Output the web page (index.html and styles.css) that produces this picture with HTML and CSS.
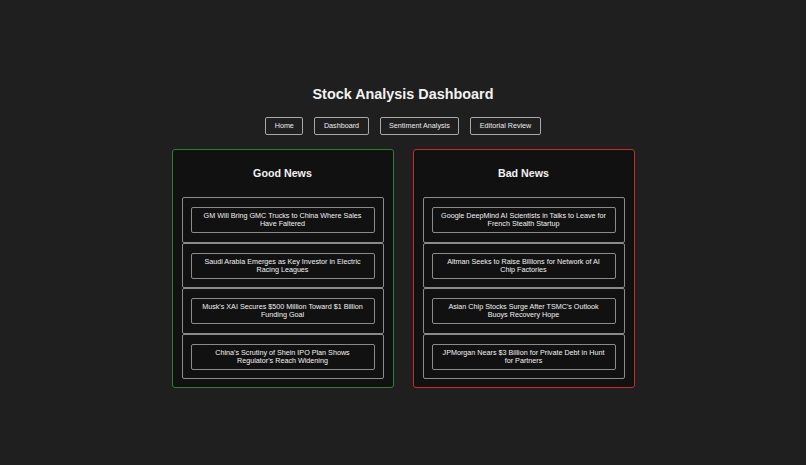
FILE: index.html
```html
<!DOCTYPE html>
<html lang="en">
<head>
<meta charset="utf-8">
<title>Stock Analysis Dashboard</title>
<link rel="stylesheet" href="styles.css">
</head>
<body>
<div class="page">
  <h1 class="title">Stock Analysis Dashboard</h1>
  <nav class="nav">
    <a class="nav-btn">Home</a>
    <a class="nav-btn">Dashboard</a>
    <a class="nav-btn">Sentiment Analysis</a>
    <a class="nav-btn">Editorial Review</a>
  </nav>
  <div class="columns">
    <section class="panel panel-good">
      <h2 class="panel-title">Good News</h2>
      <ul class="news-list">
        <li class="news-item"><div class="news-card">GM Will Bring GMC Trucks to China Where Sales Have Faltered</div></li>
        <li class="news-item"><div class="news-card">Saudi Arabia Emerges as Key Investor in Electric Racing Leagues</div></li>
        <li class="news-item"><div class="news-card">Musk's XAI Secures $500 Million Toward $1 Billion Funding Goal</div></li>
        <li class="news-item"><div class="news-card">China's Scrutiny of Shein IPO Plan Shows Regulator's Reach Widening</div></li>
      </ul>
    </section>
    <section class="panel panel-bad">
      <h2 class="panel-title">Bad News</h2>
      <ul class="news-list">
        <li class="news-item"><div class="news-card">Google DeepMind AI Scientists in Talks to Leave for French Stealth Startup</div></li>
        <li class="news-item"><div class="news-card">Altman Seeks to Raise Billions for Network of AI Chip Factories</div></li>
        <li class="news-item"><div class="news-card">Asian Chip Stocks Surge After TSMC's Outlook Buoys Recovery Hope</div></li>
        <li class="news-item"><div class="news-card">JPMorgan Nears $3 Billion for Private Debt in Hunt for Partners</div></li>
      </ul>
    </section>
  </div>
</div>
</body>
</html>
```
FILE: styles.css
```css
* { box-sizing: border-box; }
html, body {
  margin: 0;
  padding: 0;
  background: #1f1f1f;
  color: #eeeeee;
  font-family: "Liberation Sans", Arial, sans-serif;
}
.page {
  display: flex;
  flex-direction: column;
  align-items: center;
  padding-top: 85px;
}
.title {
  margin: 0;
  font-size: 14.4px;
  line-height: 18px;
  font-weight: bold;
  color: #f2f2f2;
}
.nav {
  display: flex;
  gap: 11px;
  margin-top: 14px;
}
.nav-btn {
  display: block;
  font-size: 7.2px;
  line-height: 8px;
  padding: 4px 8.5px;
  border: 1px solid #a8a8a8;
  border-radius: 2px;
  color: #ececec;
}
.columns {
  display: flex;
  gap: 19px;
  margin-top: 14px;
}
.panel {
  width: 222px;
  background: #111111;
  border: 1px solid;
  border-radius: 3px;
  padding: 9px 9px 8px;
}
.panel-good { border-color: #2f7d32; }
.panel-bad { border-color: #c62b2b; }
.panel-title {
  margin: 8px 0 17px;
  font-size: 10.7px;
  line-height: 13px;
  font-weight: bold;
  text-align: center;
  color: #f2f2f2;
}
.news-list {
  list-style: none;
  margin: 0;
  padding: 0;
}
.news-item {
  border: 1px solid #8a8a8a;
  border-radius: 2px;
  padding: 9px 8px 8.6px;
}
.news-card {
  border: 1px solid #8a8a8a;
  border-radius: 2px;
  padding: 4px 7.5px;
  font-size: 7.2px;
  line-height: 8px;
  text-align: center;
  color: #f2f2f2;
}
```
